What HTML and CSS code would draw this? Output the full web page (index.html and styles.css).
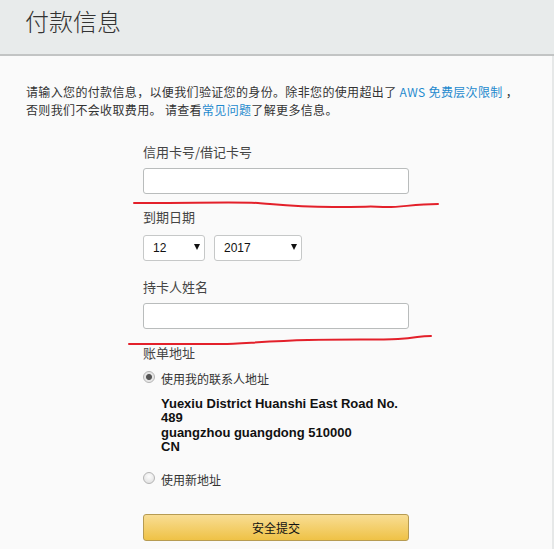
FILE: index.html
```html
<!DOCTYPE html>
<html lang="zh-CN">
<head>
    <meta charset="UTF-8">
    <meta name="viewport" content="width=device-width, initial-scale=1.0">
    <title>付款信息</title>
    <link rel="stylesheet" href="styles.css">
</head>
<body>
    <div class="header">
        <h1>付款信息</h1>
    </div>
    <div class="main">
        <p class="intro">请输入您的付款信息，以便我们验证您的身份。除非您的使用超出了 <a href="#">AWS 免费层次限制</a> ，<br>否则我们不会收取费用。 请查看<a href="#">常见问题</a>了解更多信息。</p>

        <form class="payForm">
            <label class="fieldLabel" for="cardNumber">信用卡号/借记卡号</label>
            <div class="field">
                <input type="text" id="cardNumber" class="textInput">
                <svg class="scribble one" width="310" height="12" viewBox="0 0 310 12">
                    <path d="M1 3 C 60 3, 110 2, 125 3 S 160 7, 200 7 S 235 6, 250 7 S 280 4, 305 4" />
                </svg>
            </div>

            <label class="fieldLabel second">到期日期</label>
            <div class="expiry">
                <span class="selectBox month">
                    <select><option>12</option></select>
                </span>
                <span class="selectBox year">
                    <select><option>2017</option></select>
                </span>
            </div>

            <label class="fieldLabel third" for="cardName">持卡人姓名</label>
            <div class="field">
                <input type="text" id="cardName" class="textInput">
                <svg class="scribble two" width="310" height="14" viewBox="0 0 310 14">
                    <path d="M1 11 C 50 11, 80 11, 95 11 S 140 8, 180 7 S 250 7, 270 6 S 290 3, 303 3" />
                </svg>
            </div>

            <div class="fieldLabel fourth">账单地址</div>
            <label class="radioRow">
                <input type="radio" name="address" checked>
                <span>使用我的联系人地址</span>
            </label>
            <div class="address">
                Yuexiu District Huanshi East Road No.<br>
                489<br>
                guangzhou guangdong 510000<br>
                CN
            </div>
            <label class="radioRow newAddress">
                <input type="radio" name="address">
                <span>使用新地址</span>
            </label>

            <button type="button" class="submitBtn">安全提交</button>
        </form>
    </div>
</body>
</html>
```

FILE: styles.css
```css
body {
    margin: 0;
    background-color: #fafafa;
    font-family: "Noto Sans CJK SC", "Liberation Sans", sans-serif;
    color: #333;
}
.header {
    height: 54px;
    background-color: #e8ebeb;
    border-bottom: 2px solid #c2c4c4;
    padding-left: 25px;
}
.header h1 {
    margin: 0;
    padding-top: 3px;
    font-size: 24px;
    line-height: 36px;
    font-weight: 300;
    color: #333;
}
.main {
    padding: 27px 26px 0 26px;
    border-right: 2px solid #e6e8e8;
    height: 470px;
}
.intro {
    margin: 0;
    font-size: 12px;
    line-height: 18px;
    letter-spacing: 0.35px;
    color: #333;
}
.intro a {
    color: #1f8ace;
    text-decoration: none;
}
.payForm {
    display: flex;
    flex-direction: column;
    margin-left: 117px;
    width: 266px;
}
.fieldLabel {
    font-size: 13px;
    line-height: 18px;
    color: #444;
    margin-top: 24px;
    margin-bottom: 7px;
}
.fieldLabel.second {
    margin-top: 14px;
    margin-bottom: 7px;
}
.fieldLabel.third {
    margin-top: 17px;
    margin-bottom: 7px;
}
.fieldLabel.fourth {
    margin-top: 15px;
    margin-bottom: 8px;
}
.field {
    position: relative;
}
.textInput {
    box-sizing: border-box;
    width: 266px;
    height: 26px;
    border: 1px solid #b9bcbc;
    border-radius: 3px;
    background-color: #fff;
    margin: 0;
    display: block;
}
.scribble {
    position: absolute;
    overflow: visible;
}
.scribble path {
    fill: none;
    stroke: #e3202a;
    stroke-width: 2;
    stroke-linecap: round;
}
.scribble.one {
    left: -10px;
    top: 32px;
}
.scribble.two {
    left: -15px;
    top: 30px;
}
.expiry {
    display: flex;
    gap: 9px;
}
.selectBox {
    position: relative;
    display: block;
}
.selectBox::after {
    content: "";
    position: absolute;
    top: 11px;
    border-left: 3px solid transparent;
    border-right: 3px solid transparent;
    border-top: 6px solid #111;
    pointer-events: none;
}
.selectBox.month::after {
    left: 51px;
}
.selectBox.year::after {
    left: 77px;
}
.selectBox select {
    appearance: none;
    -webkit-appearance: none;
    box-sizing: border-box;
    height: 26px;
    border: 1px solid #c6c8c8;
    border-radius: 3px;
    background-color: #fff;
    font-family: "Liberation Sans", Arial, sans-serif;
    font-size: 12px;
    color: #111;
    padding: 0 0 0 9px;
    margin: 0;
}
.selectBox.month select {
    width: 62px;
}
.selectBox.year select {
    width: 88px;
}
.radioRow {
    display: flex;
    align-items: center;
    gap: 6px;
    font-size: 12px;
    line-height: 18px;
    color: #333;
}
.radioRow input {
    appearance: none;
    -webkit-appearance: none;
    width: 12px;
    height: 12px;
    margin: 0;
    border-radius: 50%;
    border: 1px solid #b4b4b4;
    background: radial-gradient(circle at 50% 35%, #fdfdfd 0%, #dcdcdc 100%);
    box-sizing: border-box;
    position: relative;
    top: -2px;
}
.radioRow input:checked {
    background: radial-gradient(circle, #555 0, #555 2.5px, #e4e4e4 3.5px, #f4f4f4 100%);
}
.address {
    margin: 9px 0 0 18px;
    font-family: "Liberation Sans", Arial, sans-serif;
    font-weight: bold;
    font-size: 13px;
    line-height: 14.3px;
    color: #111;
}
.radioRow.newAddress {
    margin-top: 17px;
}
.submitBtn {
    margin-top: 25px;
    width: 266px;
    height: 27px;
    border: 1px solid #b69b52;
    border-radius: 3px;
    background: linear-gradient(to bottom, #f8dd94, #efc246);
    font-family: "Noto Sans CJK SC", sans-serif;
    font-size: 12px;
    color: #111;
    padding: 0;
}
```
